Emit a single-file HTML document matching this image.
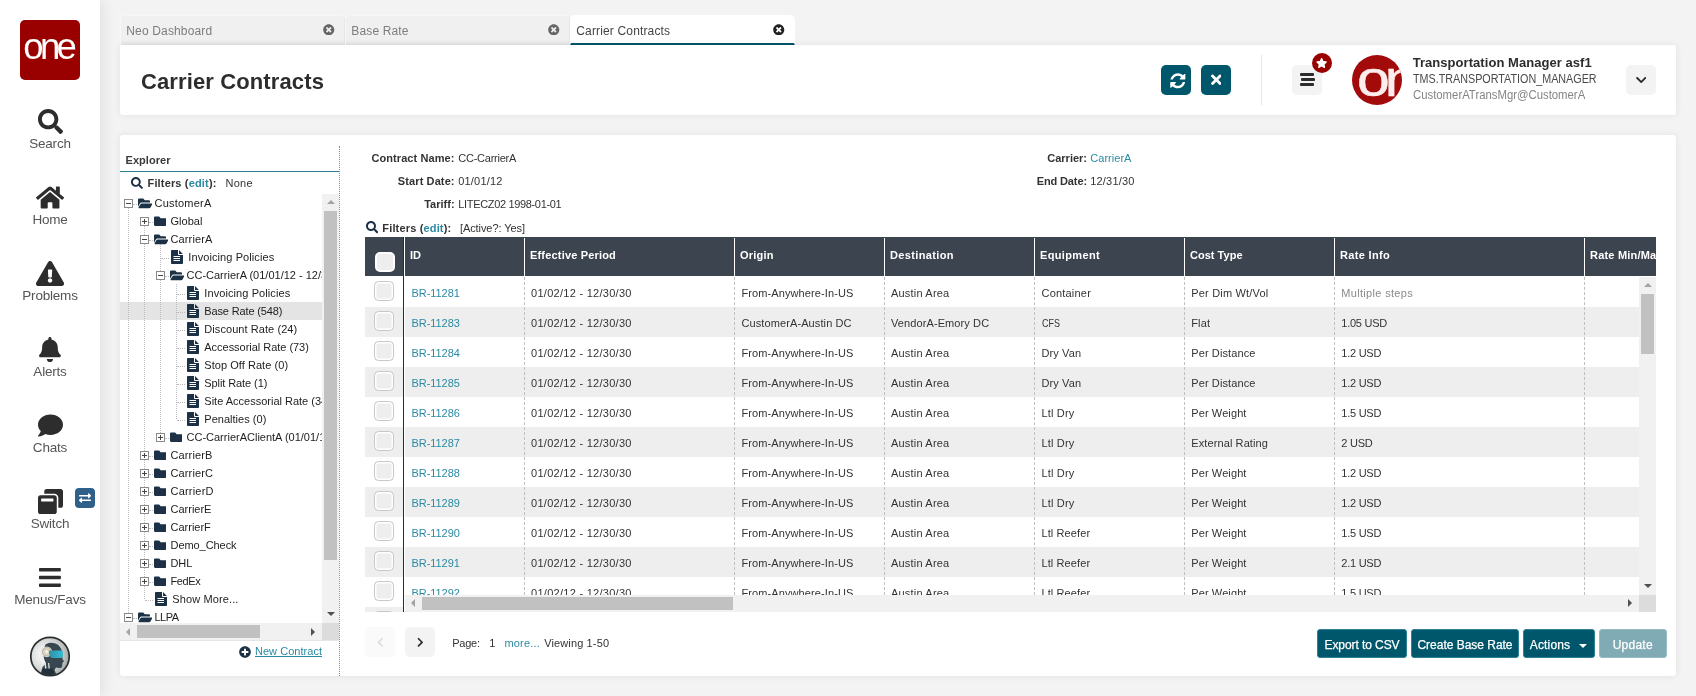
<!DOCTYPE html>
<html lang="en">
<head>
<meta charset="utf-8">
<title>Carrier Contracts</title>
<style>
*{box-sizing:border-box}
html,body{margin:0;padding:0}
body{width:1696px;height:696px;overflow:hidden;background:#f3f3f3;font-family:"Liberation Sans","DejaVu Sans",sans-serif;font-size:11px;color:#333;position:relative}
.abs{position:absolute}
a{color:#2b8aa3;text-decoration:none}
svg{display:block}
.t{position:absolute;white-space:nowrap;line-height:14px}
.b{font-weight:bold}
#side,.card,.tab{will-change:transform}
#side{position:absolute;left:0;top:0;width:100px;height:696px;background:#fff;box-shadow:0 0 16px rgba(0,0,0,.11)}
#logo{position:absolute;left:20px;top:20px;width:60px;height:60px;background:#990000;border-radius:5px}
.nav{position:absolute;left:0;width:100px;text-align:center;font-size:13.5px;color:#555;line-height:20px;letter-spacing:-.2px}
#bot{position:absolute;left:30px;top:635.500px;width:40px;height:41px}
.tab{position:absolute;top:15px;height:30px;width:225px;background:#f0f0f0;border:1px solid #f7f7f7;border-right-color:#e6e6e6;border-bottom:none;box-shadow:inset 0 -5px 4px -3px rgba(0,0,0,.06);border-radius:5px 5px 0 0;font-size:12px;color:#7d7d7d;line-height:30px;padding-left:5.300px;letter-spacing:.15px}
.tab.on{background:#fff;color:#444;border-color:#fff;box-shadow:none;border-bottom:2px solid #00566b}
.card{position:absolute;background:#fff;border-radius:3px;box-shadow:0 0 7px rgba(0,0,0,.075)}
.sq{position:absolute;width:30px;height:30px;border-radius:5px}
.teal{background:#00566b}
.lg{background:#f3f3f3}
.btn{position:absolute;height:29px;-webkit-text-stroke:.25px #fff;background:#00566b;border:1px solid #2f8196;border-radius:3px;color:#fff;font-size:12px;line-height:30px;text-align:center;white-space:nowrap}
.cb{position:absolute;left:9px;width:20px;height:20px;border:1px solid #c8c8c8;border-radius:4.500px;background:#eee;box-shadow:inset 0 0 0 1.500px #fff}
.row{position:absolute;left:0;height:30px;width:100%}
.row.g{background:#eee}
.cell{position:absolute;top:9px;white-space:nowrap;line-height:14px;letter-spacing:.1px}
.vd{position:absolute;top:0;width:0;border-left:1px dashed #c0c0c0}
.hs{position:absolute;top:1px;width:1px;height:38px;background:#fff}
.ht{position:absolute;top:11px;color:#fff;font-weight:bold;white-space:nowrap;line-height:14px}
.ex{position:absolute;width:9px;height:9px;border:1px solid #8a8a8a;background:#fff}
.ex:before{content:"";position:absolute;left:1px;top:3px;width:5px;height:1px;background:#444}
.ex.p:after{content:"";position:absolute;left:3px;top:1px;width:1px;height:5px;background:#444}
.tl{position:absolute;white-space:nowrap;line-height:14px;color:#1d1d1d}
.dv{position:absolute;width:0;border-left:1px dotted #bcbcbc}
.dh{position:absolute;height:0;border-top:1px dotted #bcbcbc}
</style>
</head>
<body>
<div id="side">
<div id="logo"><svg width="60" height="60" viewBox="0 0 60 60"><text x="3.300" y="39.300" font-family="Liberation Sans, sans-serif" font-size="36.500" fill="#fff" textLength="53.500" lengthAdjust="spacing">one</text></svg></div>
<svg class="abs" style="left:37.5px;top:108.5px" width="25.00" height="25" viewBox="0 0 512 512"><path fill="#2d2d2d" d="M505 442.7L405.3 343c-4.500-4.500-10.600-7-17-7H372c27.600-35.300 44-79.700 44-128C416 93.100 322.900 0 208 0S0 93.100 0 208s93.100 208 208 208c48.300 0 92.700-16.400 128-44v16.300c0 6.400 2.500 12.500 7 17l99.700 99.700c9.400 9.400 24.600 9.400 33.900 0l28.300-28.300c9.400-9.400 9.400-24.600.1-34zM208 336c-70.700 0-128-57.200-128-128 0-70.700 57.200-128 128-128 70.700 0 128 57.200 128 128 0 70.700-57.200 128-128 128z"/></svg>
<div class="nav" style="top:133.5px">Search</div>
<svg class="abs" style="left:35.9375px;top:184.5px" width="28.12" height="25" viewBox="0 0 576 512"><path fill="#2d2d2d" d="M280.370 148.260L96 300.110V464a16 16 0 0 0 16 16l112.060-.290a16 16 0 0 0 15.920-16V368a16 16 0 0 1 16-16h64a16 16 0 0 1 16 16v95.640a16 16 0 0 0 16 16.050L464 480a16 16 0 0 0 16-16V300L295.670 148.260a12.190 12.190 0 0 0-15.300 0zM571.600 251.470L488 182.560V44.050a12 12 0 0 0-12-12h-56a12 12 0 0 0-12 12v72.610L318.470 43a48 48 0 0 0-61 0L4.340 251.470a12 12 0 0 0-1.600 16.900l25.500 31A12 12 0 0 0 45.150 301l235.220-193.740a12.190 12.190 0 0 1 15.300 0L530.900 301a12 12 0 0 0 16.900-1.600l25.500-31a12 12 0 0 0-1.700-16.930z"/></svg>
<div class="nav" style="top:209.5px">Home</div>
<svg class="abs" style="left:35.9375px;top:260.5px" width="28.12" height="25" viewBox="0 0 576 512"><path fill="#2d2d2d" d="M569.517 440.013C587.975 472.007 564.806 512 527.940 512H48.054c-36.937 0-59.999-40.055-41.577-71.987L246.423 23.985c18.467-32.009 64.720-31.951 83.154 0l239.940 416.028zM288 354c-25.405 0-46 20.595-46 46s20.595 46 46 46 46-20.595 46-46-20.595-46-46-46zm-43.673-165.346l7.418 136c.347 6.364 5.609 11.346 11.982 11.346h48.546c6.373 0 11.635-4.982 11.982-11.346l7.418-136c.375-6.874-5.098-12.654-11.982-12.654h-63.383c-6.884 0-12.356 5.780-11.981 12.654z"/></svg>
<div class="nav" style="top:285.5px">Problems</div>
<svg class="abs" style="left:39.0625px;top:336.5px" width="21.88" height="25" viewBox="0 0 448 512"><path fill="#2d2d2d" d="M224 512c35.320 0 63.970-28.650 63.970-64H160.030c0 35.350 28.650 64 63.970 64zm215.390-149.710c-19.320-20.760-55.470-51.990-55.470-154.290 0-77.700-54.480-139.900-127.940-155.160V32c0-17.670-14.320-32-31.980-32s-31.980 14.330-31.980 32v20.840C118.560 68.100 64.080 130.300 64.080 208c0 102.300-36.150 133.530-55.470 154.290-6 6.450-8.660 14.160-8.610 21.710.110 16.400 12.980 32 32.100 32h383.800c19.120 0 32-15.600 32.100-32 .050-7.550-2.610-15.270-8.610-21.710z"/></svg>
<div class="nav" style="top:361.5px">Alerts</div>
<svg class="abs" style="left:37.5px;top:412.5px" width="25.00" height="25" viewBox="0 0 512 512"><path fill="#2d2d2d" d="M256 32C114.600 32 0 125.100 0 240c0 49.600 21.400 95 57 130.700C44.500 421.100 2.700 466 2.200 466.500c-2.200 2.300-2.800 5.700-1.500 8.700S4.800 480 8 480c66.300 0 116-31.800 140.600-51.400 32.700 12.300 69 19.400 107.400 19.400 141.400 0 256-93.100 256-208S397.400 32 256 32z"/></svg>
<div class="nav" style="top:437.5px">Chats</div>
<svg class="abs" style="left:37.5px;top:488.5px" width="25.00" height="25" viewBox="0 0 512 512"><path fill="#2d2d2d" d="M512 48v288c0 26.500-21.500 48-48 48h-48V176c0-44.100-35.900-80-80-80H128V48c0-26.500 21.500-48 48-48h288c26.500 0 48 21.500 48 48zM384 176v288c0 26.500-21.500 48-48 48H48c-26.500 0-48-21.500-48-48V176c0-26.500 21.500-48 48-48h288c26.500 0 48 21.500 48 48zm-68 28c0-6.600-5.400-12-12-12H76c-6.600 0-12 5.400-12 12v52h252v-52z"/></svg>
<div class="nav" style="top:513.5px">Switch</div>
<svg class="abs" style="left:39.0625px;top:564.5px" width="21.88" height="25" viewBox="0 0 448 512"><path fill="#2d2d2d" d="M16 132h416c8.837 0 16-7.163 16-16V76c0-8.837-7.163-16-16-16H16C7.163 60 0 67.163 0 76v40c0 8.837 7.163 16 16 16zm0 160h416c8.837 0 16-7.163 16-16v-40c0-8.837-7.163-16-16-16H16c-8.837 0-16 7.163-16 16v40c0 8.837 7.163 16 16 16zm0 160h416c8.837 0 16-7.163 16-16v-40c0-8.837-7.163-16-16-16H16c-8.837 0-16 7.163-16 16v40c0 8.837 7.163 16 16 16z"/></svg>
<div class="nav" style="top:589.5px">Menus/Favs</div>
<div class="abs" style="left:75px;top:488px;width:20px;height:20px;border-radius:4px;background:#2f6089"><svg class="abs" style="left:4px;top:4px" width="12.00" height="12" viewBox="0 0 512 512"><path fill="#fff" d="M0 168v-16c0-13.255 10.745-24 24-24h360V80c0-21.367 25.899-32.042 40.971-16.971l80 80c9.372 9.373 9.372 24.569 0 33.941l-80 80C409.956 271.982 384 261.456 384 240v-48H24c-13.255 0-24-10.745-24-24zm488 152H128v-48c0-21.314-25.862-32.080-40.971-16.971l-80 80c-9.372 9.373-9.372 24.569 0 33.941l80 80C102.057 463.997 128 453.437 128 432v-48h360c13.255 0 24-10.745 24-24v-16c0-13.255-10.745-24-24-24z"/></svg></div>
<div id="bot"><svg width="40" height="41" viewBox="0 0 40 41"><defs><radialGradient id="bg" cx="35%" cy="45%" r="75%"><stop offset="0" stop-color="#ffffff"/><stop offset=".55" stop-color="#d4d6d6"/><stop offset="1" stop-color="#8e9496"/></radialGradient><linearGradient id="vz" x1="0" x2="1"><stop offset="0" stop-color="#2f8fa6"/><stop offset="1" stop-color="#35bdd6"/></linearGradient><clipPath id="cc"><circle cx="20" cy="20.500" r="18.600"/></clipPath></defs><circle cx="20" cy="20.500" r="19.200" fill="url(#bg)" stroke="#2a2e30" stroke-width="1.700"/><g clip-path="url(#cc)"><path fill="#eef0f0" d="M10 19c0-7 4.500-12.500 11-12.500l-2 20-6.500 1C10.800 25 10 22 10 19z"/><path fill="#38474f" d="M15.500 8.500C18 6.500 22 6 25.500 7.500c4 1.700 6.300 5.200 6.800 9l.2 6.500 1.600 2.600-1.600.9-.3 3.200c-.2 1.700-1.500 2.500-3.200 2.300l-3-.5-1.500 2.500 2.500 6h-16l1.500-9 3.500-3.500c-1.500-3-2.500-6-2.500-9.500 0-3.500.8-7 2-9.500z"/><circle cx="16.700" cy="15.800" r="5.400" fill="#d9dddd"/><circle cx="16.700" cy="15.800" r="4.100" fill="none" stroke="#b79c63" stroke-width=".7"/><circle cx="16.700" cy="15.800" r="2.300" fill="#eef0f0" stroke="#cbb682" stroke-width=".6"/><path fill="url(#vz)" d="M19 14.600l12.300-.2c.9 0 1.500.6 1.500 1.500v4.200c0 1-.7 1.800-1.700 1.800l-8.300.2c-2.500 0-4-2.500-3.800-7.500z"/><path fill="#23323a" d="M12 32.500h11l2.500 8.500H10.500z"/><path fill="#dfe3e3" d="M14.500 26.500l1.200 0 .8 6h-1.500zM18 27l1.200 0 .6 5.500h-1.300z"/></g></svg></div>
</div>
<div class="tab" style="left:120px">Neo Dashboard<svg class="abs" style="left:202.2px;top:7.8px" width="11.50" height="11.5" viewBox="0 0 512 512"><path fill="#666" d="M256 8C119 8 8 119 8 256s111 248 248 248 248-111 248-248S393 8 256 8zm121.600 313.100c4.700 4.700 4.700 12.300 0 17L338 377.600c-4.700 4.700-12.300 4.700-17 0L256 312l-65.100 65.600c-4.700 4.700-12.300 4.700-17 0L134.400 338c-4.700-4.700-4.700-12.300 0-17l65.600-65-65.600-65.100c-4.700-4.700-4.700-12.300 0-17l39.600-39.600c4.700-4.700 12.300-4.700 17 0l65 65.700 65.100-65.600c4.700-4.700 12.300-4.700 17 0l39.600 39.600c4.700 4.700 4.700 12.300 0 17L312 256l65.600 65.100z"/></svg></div>
<div class="tab" style="left:345px">Base Rate<svg class="abs" style="left:202.2px;top:7.8px" width="11.50" height="11.5" viewBox="0 0 512 512"><path fill="#666" d="M256 8C119 8 8 119 8 256s111 248 248 248 248-111 248-248S393 8 256 8zm121.600 313.100c4.700 4.700 4.700 12.300 0 17L338 377.600c-4.700 4.700-12.300 4.700-17 0L256 312l-65.100 65.600c-4.700 4.700-12.300 4.700-17 0L134.400 338c-4.700-4.700-4.700-12.300 0-17l65.600-65-65.600-65.100c-4.700-4.700-4.700-12.300 0-17l39.600-39.600c4.700-4.700 12.300-4.700 17 0l65 65.700 65.100-65.600c4.700-4.700 12.300-4.700 17 0l39.600 39.600c4.700 4.700 4.700 12.300 0 17L312 256l65.600 65.100z"/></svg></div>
<div class="tab on" style="left:570px">Carrier Contracts<svg class="abs" style="left:202.2px;top:7.8px" width="11.50" height="11.5" viewBox="0 0 512 512"><path fill="#222" d="M256 8C119 8 8 119 8 256s111 248 248 248 248-111 248-248S393 8 256 8zm121.600 313.100c4.700 4.700 4.700 12.300 0 17L338 377.600c-4.700 4.700-12.300 4.700-17 0L256 312l-65.100 65.600c-4.700 4.700-12.300 4.700-17 0L134.400 338c-4.700-4.700-4.700-12.300 0-17l65.600-65-65.600-65.100c-4.700-4.700-4.700-12.300 0-17l39.600-39.600c4.700-4.700 12.300-4.700 17 0l65 65.700 65.100-65.600c4.700-4.700 12.300-4.700 17 0l39.600 39.600c4.700 4.700 4.700 12.300 0 17L312 256l65.600 65.100z"/></svg></div>
<div class="card" style="left:120px;top:45px;width:1556px;height:70px;border-top-left-radius:0">
<div class="t b" style="left:21px;top:21.700px;font-size:22px;line-height:30px;letter-spacing:.12px;color:#2d2d2d">Carrier Contracts</div>
<div class="sq teal" style="left:1041px;top:20px"><svg class="abs" style="left:7.700px;top:6.500px" width="17.600" height="17.600" viewBox="0 0 1792 1792"><path fill="#fff" d="M1639 1056q0 5-1 7-64 268-268 434.500t-478 166.500q-146 0-282.500-55t-243.500-157l-129 129q-19 19-45 19t-45-19-19-45v-448q0-26 19-45t45-19h448q26 0 45 19t19 45-19 45l-137 137q71 66 161 102t187 36q134 0 250-65t186-179q11-17 53-117 8-23 30-23h192q13 0 22.500 9.500t9.500 22.500zm25-800v448q0 26-19 45t-45 19h-448q-26 0-45-19t-19-45 19-45l138-138q-148-137-349-137-134 0-250 65t-186 179q-11 17-53 117-8 23-30 23h-199q-13 0-22.500-9.500t-9.500-22.500v-7q65-268 270-434.500t480-166.500q146 0 284 55.500t245 156.500l130-129q19-19 45-19t45 19 19 45z"/></svg></div>
<div class="sq teal" style="left:1081px;top:20px"><svg class="abs" style="left:9.9px;top:7.3px" width="10.59" height="15.4" viewBox="0 0 352 512"><path fill="#fff" d="M242.720 256l100.070-100.070c12.280-12.280 12.280-32.190 0-44.480l-22.240-22.240c-12.280-12.280-32.190-12.280-44.480 0L176 189.280 75.930 89.210c-12.280-12.280-32.190-12.280-44.480 0L9.210 111.450c-12.280 12.280-12.280 32.190 0 44.480L109.280 256 9.210 356.070c-12.280 12.280-12.280 32.190 0 44.480l22.240 22.240c12.280 12.280 32.200 12.280 44.480 0L176 322.720l100.070 100.070c12.280 12.280 32.200 12.280 44.480 0l22.240-22.240c12.280-12.280 12.280-32.190 0-44.480L242.720 256z"/></svg></div>
<div class="abs" style="left:1141px;top:10px;width:1px;height:50px;background:#e6e6e6"></div>
<div class="sq lg" style="left:1172px;top:20px"><i class="abs" style="left:8px;top:8.300px;width:13.500px;height:2.800px;border-radius:1px;background:#2d2d2d"></i><i class="abs" style="left:9px;top:13.200px;width:14px;height:2.800px;border-radius:1px;background:#2d2d2d"></i><i class="abs" style="left:8px;top:18.100px;width:13.500px;height:2.800px;border-radius:1px;background:#2d2d2d"></i></div>
<div class="abs" style="left:1192px;top:8px;width:20px;height:20px;border-radius:50%;background:#990000"><svg class="abs" style="left:4.4px;top:4.6px" width="11.25" height="10" viewBox="0 0 576 512"><path fill="#fff" d="M259.300 17.800L194 150.200 47.900 171.500c-26.200 3.800-36.700 36.100-17.700 54.600l105.700 103-25 145.500c-4.500 26.300 23.200 46 46.400 33.700L288 439.600l130.700 68.700c23.200 12.200 50.900-7.400 46.400-33.700l-25-145.500 105.700-103c19-18.500 8.500-50.800-17.700-54.600L382 150.200 316.700 17.800c-11.700-23.600-45.600-23.900-57.400 0z"/></svg></div>
<div class="abs" style="left:1232px;top:10px;width:50px;height:50px;border-radius:50%;background:#a30a0a;overflow:hidden"><svg width="50" height="50" viewBox="0 0 50 50"><text transform="scale(1.18,1)" x="4.300" y="40.800" font-family="Liberation Sans, sans-serif" font-size="50" fill="#fdeeee" stroke="#fdeeee" stroke-width=".500" letter-spacing="-4.300">one</text></svg></div>
<div class="t b" style="left:1292.700px;top:10px;font-size:13px;line-height:16px;letter-spacing:.05px;color:#2d2d2d">Transportation Manager asf1</div>
<div class="t" style="left:1292.700px;top:25.500px;font-size:12px;line-height:16px;color:#4a4a4a;transform:scaleX(.897);transform-origin:0 0">TMS.TRANSPORTATION_MANAGER</div>
<div class="t" style="left:1292.700px;top:41.500px;font-size:12px;line-height:16px;color:#858585;transform:scaleX(.945);transform-origin:0 0">CustomerATransMgr@CustomerA</div>
<div class="sq lg" style="left:1506px;top:20px"><svg class="abs" style="left:9.7px;top:9px" width="10.50" height="12" viewBox="0 0 448 512"><path fill="#2d2d2d" d="M207.029 381.476L12.686 187.132c-9.373-9.373-9.373-24.569 0-33.941l22.667-22.667c9.357-9.357 24.522-9.375 33.901-.04L224 284.505l154.745-154.021c9.379-9.335 24.544-9.317 33.901.04l22.667 22.667c9.373 9.373 9.373 24.569 0 33.941L240.971 381.476c-9.373 9.372-24.569 9.372-33.942 0z"/></svg></div>
</div>
<div class="card" style="left:120px;top:135px;width:1556px;height:541px">
<div class="t b" style="left:5.5px;top:17.5px;letter-spacing:0.04px;color:#3a3a3a">Explorer</div>
<div class="abs" style="left:0;top:36px;width:219px;height:1px;background:#2b7d91"></div>
<div class="dv" style="left:219px;top:11px;height:530px;border-left-color:#8c8c8c"></div>
<svg class="abs" style="left:11px;top:42px" width="12.00" height="12" viewBox="0 0 512 512"><path fill="#1c3046" d="M505 442.7L405.3 343c-4.500-4.500-10.600-7-17-7H372c27.600-35.300 44-79.700 44-128C416 93.100 322.900 0 208 0S0 93.100 0 208s93.100 208 208 208c48.300 0 92.700-16.400 128-44v16.300c0 6.400 2.500 12.500 7 17l99.700 99.700c9.400 9.400 24.600 9.400 33.900 0l28.300-28.300c9.400-9.400 9.400-24.600.1-34zM208 336c-70.700 0-128-57.200-128-128 0-70.700 57.200-128 128-128 70.700 0 128 57.200 128 128 0 70.700-57.200 128-128 128z"/></svg>
<div class="t b" style="left:27.5px;top:40.5px;letter-spacing:0.16px;">Filters (<a>edit</a>):</div>
<div class="t " style="left:105.5px;top:40.5px;letter-spacing:0.25px;">None</div>
<div class="abs" style="left:0;top:59px;width:202px;height:429px;overflow:hidden">
<div class="abs" style="left:0;top:108px;width:202px;height:18px;background:#e4e4e4"></div>
<div class="dv" style="left:8px;top:14px;height:405px"></div>
<div class="dv" style="left:24px;top:32px;height:373px"></div>
<div class="dv" style="left:40px;top:50px;height:193px"></div>
<div class="dv" style="left:56px;top:90px;height:135px"></div>
<div class="ex" style="left:4px;top:5px"></div>
<div class="dh" style="left:13px;top:9.5px;width:4px"></div>
<svg class="abs" style="left:18px;top:2.5px" width="14.40" height="12.8" viewBox="0 0 576 512"><path fill="#1c3046" d="M572.694 292.093L500.270 416.248A63.997 63.997 0 0 1 444.989 448H45.025c-18.523 0-30.064-20.093-20.731-36.093l72.424-124.155A64 64 0 0 1 152 256h399.964c18.523 0 30.064 20.093 20.730 36.093zM152 224h328v-48c0-26.510-21.490-48-48-48H272l-64-64H48C21.490 64 0 85.490 0 112v278.046l69.077-118.418C86.214 242.250 117.989 224 152 224z"/></svg>
<div class="tl" style="left:34.5px;top:2px;letter-spacing:0.22px">CustomerA</div>
<div class="ex p" style="left:20px;top:23px"></div>
<div class="dh" style="left:29px;top:27.5px;width:4px"></div>
<svg class="abs" style="left:33.8px;top:20.5px" width="12.60" height="12.6" viewBox="0 0 512 512"><path fill="#1c3046" d="M464 128H272l-64-64H48C21.490 64 0 85.490 0 112v288c0 26.510 21.490 48 48 48h416c26.510 0 48-21.490 48-48V176c0-26.510-21.490-48-48-48z"/></svg>
<div class="tl" style="left:50.5px;top:20px;letter-spacing:0.03px">Global</div>
<div class="ex" style="left:20px;top:41px"></div>
<div class="dh" style="left:29px;top:45.5px;width:4px"></div>
<svg class="abs" style="left:34px;top:38.5px" width="14.40" height="12.8" viewBox="0 0 576 512"><path fill="#1c3046" d="M572.694 292.093L500.270 416.248A63.997 63.997 0 0 1 444.989 448H45.025c-18.523 0-30.064-20.093-20.731-36.093l72.424-124.155A64 64 0 0 1 152 256h399.964c18.523 0 30.064 20.093 20.730 36.093zM152 224h328v-48c0-26.510-21.490-48-48-48H272l-64-64H48C21.490 64 0 85.490 0 112v278.046l69.077-118.418C86.214 242.250 117.989 224 152 224z"/></svg>
<div class="tl" style="left:50.5px;top:38px;letter-spacing:0.13px">CarrierA</div>
<div class="dh" style="left:41px;top:63.5px;width:8px"></div>
<svg class="abs" style="left:51px;top:56px" width="12" height="14" viewBox="0 0 12 14"><path fill="#1c3046" d="M.8 0H7v4.200c0 .450.350.800.800.800H12v8.200c0 .450-.350.800-.800.800H.8c-.450 0-.800-.350-.800-.800V.8C0 .350.350 0 .8 0zM8 0.100L11.900 4H8z"/><path fill="#fff" d="M2.500 6h6.500v1h-6.500zM2.500 8h6.500v1h-6.500zM2.500 10h6.500v1h-6.500z"/></svg>
<div class="tl" style="left:68.3px;top:56px;letter-spacing:0.09px">Invoicing Policies</div>
<div class="ex" style="left:36px;top:77px"></div>
<div class="dh" style="left:45px;top:81.5px;width:4px"></div>
<svg class="abs" style="left:50px;top:74.5px" width="14.40" height="12.8" viewBox="0 0 576 512"><path fill="#1c3046" d="M572.694 292.093L500.270 416.248A63.997 63.997 0 0 1 444.989 448H45.025c-18.523 0-30.064-20.093-20.731-36.093l72.424-124.155A64 64 0 0 1 152 256h399.964c18.523 0 30.064 20.093 20.730 36.093zM152 224h328v-48c0-26.510-21.490-48-48-48H272l-64-64H48C21.490 64 0 85.490 0 112v278.046l69.077-118.418C86.214 242.250 117.989 224 152 224z"/></svg>
<div class="tl" style="left:66.5px;top:74px;letter-spacing:0px">CC-CarrierA (01/01/12 - 12/31/30)</div>
<div class="dh" style="left:57px;top:99.5px;width:8px"></div>
<svg class="abs" style="left:67px;top:92px" width="12" height="14" viewBox="0 0 12 14"><path fill="#1c3046" d="M.8 0H7v4.200c0 .450.350.800.800.800H12v8.200c0 .450-.350.800-.800.800H.8c-.450 0-.800-.350-.800-.800V.8C0 .350.350 0 .8 0zM8 0.100L11.900 4H8z"/><path fill="#fff" d="M2.500 6h6.500v1h-6.500zM2.500 8h6.500v1h-6.500zM2.500 10h6.500v1h-6.500z"/></svg>
<div class="tl" style="left:84.3px;top:92px;letter-spacing:0.09px">Invoicing Policies</div>
<div class="dh" style="left:57px;top:117.5px;width:8px"></div>
<svg class="abs" style="left:67px;top:110px" width="12" height="14" viewBox="0 0 12 14"><path fill="#1c3046" d="M.8 0H7v4.200c0 .450.350.800.800.800H12v8.200c0 .450-.350.800-.800.800H.8c-.450 0-.800-.350-.800-.800V.8C0 .350.350 0 .8 0zM8 0.100L11.900 4H8z"/><path fill="#fff" d="M2.500 6h6.500v1h-6.500zM2.500 8h6.500v1h-6.500zM2.500 10h6.500v1h-6.500z"/></svg>
<div class="tl" style="left:84.3px;top:110px;letter-spacing:-0.14px">Base Rate (548)</div>
<div class="dh" style="left:57px;top:135.5px;width:8px"></div>
<svg class="abs" style="left:67px;top:128px" width="12" height="14" viewBox="0 0 12 14"><path fill="#1c3046" d="M.8 0H7v4.200c0 .450.350.800.800.800H12v8.200c0 .450-.350.800-.800.800H.8c-.450 0-.800-.350-.800-.800V.8C0 .350.350 0 .8 0zM8 0.100L11.900 4H8z"/><path fill="#fff" d="M2.500 6h6.500v1h-6.500zM2.500 8h6.500v1h-6.500zM2.500 10h6.500v1h-6.500z"/></svg>
<div class="tl" style="left:84.3px;top:128px;letter-spacing:0.07px">Discount Rate (24)</div>
<div class="dh" style="left:57px;top:153.5px;width:8px"></div>
<svg class="abs" style="left:67px;top:146px" width="12" height="14" viewBox="0 0 12 14"><path fill="#1c3046" d="M.8 0H7v4.200c0 .450.350.800.800.800H12v8.200c0 .450-.350.800-.800.800H.8c-.450 0-.800-.350-.800-.800V.8C0 .350.350 0 .8 0zM8 0.100L11.900 4H8z"/><path fill="#fff" d="M2.500 6h6.500v1h-6.500zM2.500 8h6.500v1h-6.500zM2.500 10h6.500v1h-6.500z"/></svg>
<div class="tl" style="left:84.3px;top:146px;letter-spacing:-0.03px">Accessorial Rate (73)</div>
<div class="dh" style="left:57px;top:171.5px;width:8px"></div>
<svg class="abs" style="left:67px;top:164px" width="12" height="14" viewBox="0 0 12 14"><path fill="#1c3046" d="M.8 0H7v4.200c0 .450.350.800.800.800H12v8.200c0 .450-.350.800-.800.800H.8c-.450 0-.800-.350-.800-.800V.8C0 .350.350 0 .8 0zM8 0.100L11.900 4H8z"/><path fill="#fff" d="M2.500 6h6.500v1h-6.500zM2.500 8h6.500v1h-6.500zM2.500 10h6.500v1h-6.500z"/></svg>
<div class="tl" style="left:84.3px;top:164px;letter-spacing:0.05px">Stop Off Rate (0)</div>
<div class="dh" style="left:57px;top:189.5px;width:8px"></div>
<svg class="abs" style="left:67px;top:182px" width="12" height="14" viewBox="0 0 12 14"><path fill="#1c3046" d="M.8 0H7v4.200c0 .450.350.800.800.800H12v8.200c0 .450-.350.800-.800.800H.8c-.450 0-.800-.350-.800-.800V.8C0 .350.350 0 .8 0zM8 0.100L11.900 4H8z"/><path fill="#fff" d="M2.500 6h6.500v1h-6.500zM2.500 8h6.500v1h-6.500zM2.500 10h6.500v1h-6.500z"/></svg>
<div class="tl" style="left:84.3px;top:182px;letter-spacing:-0.09px">Split Rate (1)</div>
<div class="dh" style="left:57px;top:207.5px;width:8px"></div>
<svg class="abs" style="left:67px;top:200px" width="12" height="14" viewBox="0 0 12 14"><path fill="#1c3046" d="M.8 0H7v4.200c0 .450.350.800.800.800H12v8.200c0 .450-.350.800-.800.800H.8c-.450 0-.800-.350-.800-.800V.8C0 .350.350 0 .8 0zM8 0.100L11.900 4H8z"/><path fill="#fff" d="M2.500 6h6.500v1h-6.500zM2.500 8h6.500v1h-6.500zM2.500 10h6.500v1h-6.500z"/></svg>
<div class="tl" style="left:84.3px;top:200px;letter-spacing:0px">Site Accessorial Rate (34)</div>
<div class="dh" style="left:57px;top:225.5px;width:8px"></div>
<svg class="abs" style="left:67px;top:218px" width="12" height="14" viewBox="0 0 12 14"><path fill="#1c3046" d="M.8 0H7v4.200c0 .450.350.800.800.800H12v8.200c0 .450-.350.800-.800.800H.8c-.450 0-.800-.350-.800-.800V.8C0 .350.350 0 .8 0zM8 0.100L11.900 4H8z"/><path fill="#fff" d="M2.500 6h6.500v1h-6.500zM2.500 8h6.500v1h-6.500zM2.500 10h6.500v1h-6.500z"/></svg>
<div class="tl" style="left:84.3px;top:218px;letter-spacing:0.02px">Penalties (0)</div>
<div class="ex p" style="left:36px;top:239px"></div>
<div class="dh" style="left:45px;top:243.5px;width:4px"></div>
<svg class="abs" style="left:49.8px;top:236.5px" width="12.60" height="12.6" viewBox="0 0 512 512"><path fill="#1c3046" d="M464 128H272l-64-64H48C21.490 64 0 85.490 0 112v288c0 26.510 21.490 48 48 48h416c26.510 0 48-21.490 48-48V176c0-26.510-21.490-48-48-48z"/></svg>
<div class="tl" style="left:66.5px;top:236px;letter-spacing:0px">CC-CarrierAClientA (01/01/12 - 12/31/30)</div>
<div class="ex p" style="left:20px;top:257px"></div>
<div class="dh" style="left:29px;top:261.5px;width:4px"></div>
<svg class="abs" style="left:33.8px;top:254.5px" width="12.60" height="12.6" viewBox="0 0 512 512"><path fill="#1c3046" d="M464 128H272l-64-64H48C21.490 64 0 85.490 0 112v288c0 26.510 21.490 48 48 48h416c26.510 0 48-21.490 48-48V176c0-26.510-21.490-48-48-48z"/></svg>
<div class="tl" style="left:50.5px;top:254px;letter-spacing:0.13px">CarrierB</div>
<div class="ex p" style="left:20px;top:275px"></div>
<div class="dh" style="left:29px;top:279.5px;width:4px"></div>
<svg class="abs" style="left:33.8px;top:272.5px" width="12.60" height="12.6" viewBox="0 0 512 512"><path fill="#1c3046" d="M464 128H272l-64-64H48C21.490 64 0 85.490 0 112v288c0 26.510 21.490 48 48 48h416c26.510 0 48-21.490 48-48V176c0-26.510-21.490-48-48-48z"/></svg>
<div class="tl" style="left:50.5px;top:272px;letter-spacing:0.13px">CarrierC</div>
<div class="ex p" style="left:20px;top:293px"></div>
<div class="dh" style="left:29px;top:297.5px;width:4px"></div>
<svg class="abs" style="left:33.8px;top:290.5px" width="12.60" height="12.6" viewBox="0 0 512 512"><path fill="#1c3046" d="M464 128H272l-64-64H48C21.490 64 0 85.490 0 112v288c0 26.510 21.490 48 48 48h416c26.510 0 48-21.490 48-48V176c0-26.510-21.490-48-48-48z"/></svg>
<div class="tl" style="left:50.5px;top:290px;letter-spacing:0.2px">CarrierD</div>
<div class="ex p" style="left:20px;top:311px"></div>
<div class="dh" style="left:29px;top:315.5px;width:4px"></div>
<svg class="abs" style="left:33.8px;top:308.5px" width="12.60" height="12.6" viewBox="0 0 512 512"><path fill="#1c3046" d="M464 128H272l-64-64H48C21.490 64 0 85.490 0 112v288c0 26.510 21.490 48 48 48h416c26.510 0 48-21.490 48-48V176c0-26.510-21.490-48-48-48z"/></svg>
<div class="tl" style="left:50.5px;top:308px;letter-spacing:0px">CarrierE</div>
<div class="ex p" style="left:20px;top:329px"></div>
<div class="dh" style="left:29px;top:333.5px;width:4px"></div>
<svg class="abs" style="left:33.8px;top:326.5px" width="12.60" height="12.6" viewBox="0 0 512 512"><path fill="#1c3046" d="M464 128H272l-64-64H48C21.490 64 0 85.490 0 112v288c0 26.510 21.490 48 48 48h416c26.510 0 48-21.490 48-48V176c0-26.510-21.490-48-48-48z"/></svg>
<div class="tl" style="left:50.5px;top:326px;letter-spacing:0px">CarrierF</div>
<div class="ex p" style="left:20px;top:347px"></div>
<div class="dh" style="left:29px;top:351.5px;width:4px"></div>
<svg class="abs" style="left:33.8px;top:344.5px" width="12.60" height="12.6" viewBox="0 0 512 512"><path fill="#1c3046" d="M464 128H272l-64-64H48C21.490 64 0 85.490 0 112v288c0 26.510 21.490 48 48 48h416c26.510 0 48-21.490 48-48V176c0-26.510-21.490-48-48-48z"/></svg>
<div class="tl" style="left:50.5px;top:344px;letter-spacing:-0.06px">Demo_Check</div>
<div class="ex p" style="left:20px;top:365px"></div>
<div class="dh" style="left:29px;top:369.5px;width:4px"></div>
<svg class="abs" style="left:33.8px;top:362.5px" width="12.60" height="12.6" viewBox="0 0 512 512"><path fill="#1c3046" d="M464 128H272l-64-64H48C21.490 64 0 85.490 0 112v288c0 26.510 21.490 48 48 48h416c26.510 0 48-21.490 48-48V176c0-26.510-21.490-48-48-48z"/></svg>
<div class="tl" style="left:50.5px;top:362px;letter-spacing:-0.09px">DHL</div>
<div class="ex p" style="left:20px;top:383px"></div>
<div class="dh" style="left:29px;top:387.5px;width:4px"></div>
<svg class="abs" style="left:33.8px;top:380.5px" width="12.60" height="12.6" viewBox="0 0 512 512"><path fill="#1c3046" d="M464 128H272l-64-64H48C21.490 64 0 85.490 0 112v288c0 26.510 21.490 48 48 48h416c26.510 0 48-21.490 48-48V176c0-26.510-21.490-48-48-48z"/></svg>
<div class="tl" style="left:50.5px;top:380px;letter-spacing:-0.41px">FedEx</div>
<div class="dh" style="left:25px;top:405.5px;width:8px"></div>
<svg class="abs" style="left:35px;top:398px" width="12" height="14" viewBox="0 0 12 14"><path fill="#1c3046" d="M.8 0H7v4.200c0 .450.350.800.800.800H12v8.200c0 .450-.350.800-.800.800H.8c-.450 0-.800-.350-.800-.800V.8C0 .350.350 0 .8 0zM8 0.100L11.900 4H8z"/><path fill="#fff" d="M2.500 6h6.500v1h-6.500zM2.500 8h6.500v1h-6.500zM2.500 10h6.500v1h-6.500z"/></svg>
<div class="tl" style="left:52.3px;top:398px;letter-spacing:0.12px">Show More...</div>
<div class="ex" style="left:4px;top:419px"></div>
<div class="dh" style="left:13px;top:423.5px;width:4px"></div>
<svg class="abs" style="left:18px;top:416.5px" width="14.40" height="12.8" viewBox="0 0 576 512"><path fill="#1c3046" d="M572.694 292.093L500.270 416.248A63.997 63.997 0 0 1 444.989 448H45.025c-18.523 0-30.064-20.093-20.731-36.093l72.424-124.155A64 64 0 0 1 152 256h399.964c18.523 0 30.064 20.093 20.730 36.093zM152 224h328v-48c0-26.510-21.490-48-48-48H272l-64-64H48C21.490 64 0 85.490 0 112v278.046l69.077-118.418C86.214 242.250 117.989 224 152 224z"/></svg>
<div class="tl" style="left:34.5px;top:416px;letter-spacing:-0.52px">LLPA</div>
</div>
<div class="abs" style="left:202px;top:59px;width:17px;height:429px;background:#f1f1f1"><i class="abs" style="left:2px;top:17px;width:13px;height:349px;background:#c1c1c1"></i><i class="abs" style="left:4.500px;top:6px;border:4px solid transparent;border-top:0;border-bottom:4.500px solid #a3a3a3"></i><i class="abs" style="left:4.500px;top:418px;border:4px solid transparent;border-bottom:0;border-top:4.500px solid #505050"></i></div>
<div class="abs" style="left:0;top:488px;width:202px;height:17px;background:#f1f1f1"><i class="abs" style="left:17px;top:2px;width:123px;height:13px;background:#c1c1c1"></i><i class="abs" style="left:6px;top:4.500px;border:4px solid transparent;border-left:0;border-right:4.500px solid #a3a3a3"></i><i class="abs" style="left:191px;top:4.500px;border:4px solid transparent;border-right:0;border-left:4.500px solid #505050"></i></div>
<div class="abs" style="left:202px;top:488px;width:17px;height:17px;background:#dcdcdc"></div>
<div class="abs" style="left:0;top:505px;width:219px;height:1px;background:#e6e6e6"></div>
<svg class="abs" style="left:119.2px;top:511.2px" width="12.00" height="12" viewBox="0 0 512 512"><path fill="#1c3046" d="M256 8C119 8 8 119 8 256s111 248 248 248 248-111 248-248S393 8 256 8zm144 276c0 6.600-5.400 12-12 12h-92v92c0 6.600-5.400 12-12 12h-56c-6.600 0-12-5.400-12-12v-92h-92c-6.600 0-12-5.400-12-12v-56c0-6.600 5.400-12 12-12h92v-92c0-6.600 5.400-12 12-12h56c6.600 0 12 5.400 12 12v92h92c6.600 0 12 5.400 12 12v56z"/></svg>
<div class="t " style="left:135px;top:509px;letter-spacing:0.03px;"><a style="text-decoration:underline">New Contract</a></div>
<div class="t b" style="left:251.4px;top:15.5px;letter-spacing:0.09px;">Contract Name:</div>
<div class="t " style="left:338.3px;top:15.5px;letter-spacing:-0.25px;">CC-CarrierA</div>
<div class="t b" style="left:277.8px;top:38.5px;letter-spacing:0.11px;">Start Date:</div>
<div class="t " style="left:338.3px;top:38.5px;letter-spacing:0.17px;">01/01/12</div>
<div class="t b" style="left:304.2px;top:61.5px;letter-spacing:0.01px;">Tariff:</div>
<div class="t " style="left:338.3px;top:61.5px;letter-spacing:-0.34px;">LITECZ02 1998-01-01</div>
<div class="t b" style="left:927.3px;top:15.5px;letter-spacing:-0.01px;">Carrier:</div>
<div class="t " style="left:970.3px;top:15.5px;letter-spacing:0.03px;"><a>CarrierA</a></div>
<div class="t b" style="left:916.7px;top:38.5px;letter-spacing:-0.12px;">End Date:</div>
<div class="t " style="left:970.3px;top:38.5px;letter-spacing:0.17px;">12/31/30</div>
<svg class="abs" style="left:246px;top:86.3px" width="12.30" height="12.3" viewBox="0 0 512 512"><path fill="#1c3046" d="M505 442.7L405.3 343c-4.500-4.500-10.600-7-17-7H372c27.600-35.300 44-79.700 44-128C416 93.100 322.900 0 208 0S0 93.100 0 208s93.100 208 208 208c48.300 0 92.700-16.400 128-44v16.300c0 6.400 2.500 12.500 7 17l99.700 99.700c9.400 9.400 24.600 9.400 33.900 0l28.300-28.300c9.400-9.400 9.400-24.600.1-34zM208 336c-70.700 0-128-57.200-128-128 0-70.700 57.200-128 128-128 70.700 0 128 57.200 128 128 0 70.700-57.200 128-128 128z"/></svg>
<div class="t b" style="left:262.3px;top:85.5px;letter-spacing:0.16px;">Filters (<a>edit</a>):</div>
<div class="t " style="left:339.9px;top:85.5px;letter-spacing:-0.07px;">[Active?: Yes]</div>
<div class="abs" style="left:245px;top:102px;width:1291px;height:375px;overflow:hidden">
<div class="abs" style="left:0;top:0;width:1291px;height:39px;background:#3c444f"></div>
<div class="abs" style="left:10px;top:15px;width:20px;height:20px;border:2px solid #fff;border-radius:5px;background:#eee"></div>
<div class="ht" style="left:45px;letter-spacing:0px">ID</div>
<div class="hs" style="left:159px"></div>
<div class="ht" style="left:165px;letter-spacing:0.18px">Effective Period</div>
<div class="hs" style="left:369px"></div>
<div class="ht" style="left:375px;letter-spacing:0.23px">Origin</div>
<div class="hs" style="left:519px"></div>
<div class="ht" style="left:525px;letter-spacing:0.37px">Destination</div>
<div class="hs" style="left:669px"></div>
<div class="ht" style="left:675px;letter-spacing:0.35px">Equipment</div>
<div class="hs" style="left:819px"></div>
<div class="ht" style="left:825px;letter-spacing:0.02px">Cost Type</div>
<div class="hs" style="left:969px"></div>
<div class="ht" style="left:975px;letter-spacing:0.33px">Rate Info</div>
<div class="hs" style="left:1219px"></div>
<div class="ht" style="left:1225px;letter-spacing:0.2px">Rate Min/Max</div>
<div class="abs" style="left:0;top:40px;width:38px;height:334.500px;overflow:hidden">
<div class="row" style="top:0px"><i class="cb" style="top:4px"></i></div>
<div class="row g" style="top:30px"><i class="cb" style="top:4px"></i></div>
<div class="row" style="top:60px"><i class="cb" style="top:4px"></i></div>
<div class="row g" style="top:90px"><i class="cb" style="top:4px"></i></div>
<div class="row" style="top:120px"><i class="cb" style="top:4px"></i></div>
<div class="row g" style="top:150px"><i class="cb" style="top:4px"></i></div>
<div class="row" style="top:180px"><i class="cb" style="top:4px"></i></div>
<div class="row g" style="top:210px"><i class="cb" style="top:4px"></i></div>
<div class="row" style="top:240px"><i class="cb" style="top:4px"></i></div>
<div class="row g" style="top:270px"><i class="cb" style="top:4px"></i></div>
<div class="row" style="top:300px"><i class="cb" style="top:4px"></i></div>
<div class="row g" style="top:330px"><i class="cb" style="top:4px"></i></div>
</div>
<div class="abs" style="left:38px;top:0;width:1px;height:375px;background:#2b2b2b"></div><div class="hs" style="left:39px;top:0;height:39px"></div>
<div class="abs" style="left:40px;top:40px;width:1234px;height:318px;overflow:hidden">
<div class="row" style="top:0px">
<a class="cell" style="left:6.500px;letter-spacing:-.05px">BR-11281</a>
<span class="cell" style="left:126px;letter-spacing:.28px">01/02/12 - 12/30/30</span>
<span class="cell" style="left:336.5px;letter-spacing:0.1px">From-Anywhere-In-US</span>
<span class="cell" style="left:486px;letter-spacing:0.19px">Austin Area</span>
<span class="cell" style="left:636.5px;letter-spacing:0.2px">Container</span>
<span class="cell" style="left:786.3px;letter-spacing:0.18px">Per Dim Wt/Vol</span>
<span class="cell" style="left:936.3px;letter-spacing:0.32px;color:#8a8a8a">Multiple steps</span>
</div>
<div class="row g" style="top:30px">
<a class="cell" style="left:6.500px;letter-spacing:-.05px">BR-11283</a>
<span class="cell" style="left:126px;letter-spacing:.28px">01/02/12 - 12/30/30</span>
<span class="cell" style="left:336.5px;letter-spacing:0.1px">CustomerA-Austin DC</span>
<span class="cell" style="left:486px;letter-spacing:0.1px">VendorA-Emory DC</span>
<span class="cell" style="left:636.5px;letter-spacing:0px;transform:scaleX(.82);transform-origin:0 50%">CFS</span>
<span class="cell" style="left:786.3px;letter-spacing:0.1px">Flat</span>
<span class="cell" style="left:936.3px;letter-spacing:-0.25px">1.05 USD</span>
</div>
<div class="row" style="top:60px">
<a class="cell" style="left:6.500px;letter-spacing:-.05px">BR-11284</a>
<span class="cell" style="left:126px;letter-spacing:.28px">01/02/12 - 12/30/30</span>
<span class="cell" style="left:336.5px;letter-spacing:0.1px">From-Anywhere-In-US</span>
<span class="cell" style="left:486px;letter-spacing:0.19px">Austin Area</span>
<span class="cell" style="left:636.5px;letter-spacing:0.1px">Dry Van</span>
<span class="cell" style="left:786.3px;letter-spacing:0.1px">Per Distance</span>
<span class="cell" style="left:936.3px;letter-spacing:-0.25px">1.2 USD</span>
</div>
<div class="row g" style="top:90px">
<a class="cell" style="left:6.500px;letter-spacing:-.05px">BR-11285</a>
<span class="cell" style="left:126px;letter-spacing:.28px">01/02/12 - 12/30/30</span>
<span class="cell" style="left:336.5px;letter-spacing:0.1px">From-Anywhere-In-US</span>
<span class="cell" style="left:486px;letter-spacing:0.19px">Austin Area</span>
<span class="cell" style="left:636.5px;letter-spacing:0.1px">Dry Van</span>
<span class="cell" style="left:786.3px;letter-spacing:0.1px">Per Distance</span>
<span class="cell" style="left:936.3px;letter-spacing:-0.25px">1.2 USD</span>
</div>
<div class="row" style="top:120px">
<a class="cell" style="left:6.500px;letter-spacing:-.05px">BR-11286</a>
<span class="cell" style="left:126px;letter-spacing:.28px">01/02/12 - 12/30/30</span>
<span class="cell" style="left:336.5px;letter-spacing:0.1px">From-Anywhere-In-US</span>
<span class="cell" style="left:486px;letter-spacing:0.19px">Austin Area</span>
<span class="cell" style="left:636.5px;letter-spacing:0.17px">Ltl Dry</span>
<span class="cell" style="left:786.3px;letter-spacing:0.1px">Per Weight</span>
<span class="cell" style="left:936.3px;letter-spacing:-0.25px">1.5 USD</span>
</div>
<div class="row g" style="top:150px">
<a class="cell" style="left:6.500px;letter-spacing:-.05px">BR-11287</a>
<span class="cell" style="left:126px;letter-spacing:.28px">01/02/12 - 12/30/30</span>
<span class="cell" style="left:336.5px;letter-spacing:0.1px">From-Anywhere-In-US</span>
<span class="cell" style="left:486px;letter-spacing:0.19px">Austin Area</span>
<span class="cell" style="left:636.5px;letter-spacing:0.17px">Ltl Dry</span>
<span class="cell" style="left:786.3px;letter-spacing:0.1px">External Rating</span>
<span class="cell" style="left:936.3px;letter-spacing:-0.25px">2 USD</span>
</div>
<div class="row" style="top:180px">
<a class="cell" style="left:6.500px;letter-spacing:-.05px">BR-11288</a>
<span class="cell" style="left:126px;letter-spacing:.28px">01/02/12 - 12/30/30</span>
<span class="cell" style="left:336.5px;letter-spacing:0.1px">From-Anywhere-In-US</span>
<span class="cell" style="left:486px;letter-spacing:0.19px">Austin Area</span>
<span class="cell" style="left:636.5px;letter-spacing:0.17px">Ltl Dry</span>
<span class="cell" style="left:786.3px;letter-spacing:0.1px">Per Weight</span>
<span class="cell" style="left:936.3px;letter-spacing:-0.25px">1.2 USD</span>
</div>
<div class="row g" style="top:210px">
<a class="cell" style="left:6.500px;letter-spacing:-.05px">BR-11289</a>
<span class="cell" style="left:126px;letter-spacing:.28px">01/02/12 - 12/30/30</span>
<span class="cell" style="left:336.5px;letter-spacing:0.1px">From-Anywhere-In-US</span>
<span class="cell" style="left:486px;letter-spacing:0.19px">Austin Area</span>
<span class="cell" style="left:636.5px;letter-spacing:0.17px">Ltl Dry</span>
<span class="cell" style="left:786.3px;letter-spacing:0.1px">Per Weight</span>
<span class="cell" style="left:936.3px;letter-spacing:-0.25px">1.2 USD</span>
</div>
<div class="row" style="top:240px">
<a class="cell" style="left:6.500px;letter-spacing:-.05px">BR-11290</a>
<span class="cell" style="left:126px;letter-spacing:.28px">01/02/12 - 12/30/30</span>
<span class="cell" style="left:336.5px;letter-spacing:0.1px">From-Anywhere-In-US</span>
<span class="cell" style="left:486px;letter-spacing:0.19px">Austin Area</span>
<span class="cell" style="left:636.5px;letter-spacing:0.1px">Ltl Reefer</span>
<span class="cell" style="left:786.3px;letter-spacing:0.1px">Per Weight</span>
<span class="cell" style="left:936.3px;letter-spacing:-0.25px">1.5 USD</span>
</div>
<div class="row g" style="top:270px">
<a class="cell" style="left:6.500px;letter-spacing:-.05px">BR-11291</a>
<span class="cell" style="left:126px;letter-spacing:.28px">01/02/12 - 12/30/30</span>
<span class="cell" style="left:336.5px;letter-spacing:0.1px">From-Anywhere-In-US</span>
<span class="cell" style="left:486px;letter-spacing:0.19px">Austin Area</span>
<span class="cell" style="left:636.5px;letter-spacing:0.1px">Ltl Reefer</span>
<span class="cell" style="left:786.3px;letter-spacing:0.1px">Per Weight</span>
<span class="cell" style="left:936.3px;letter-spacing:-0.25px">2.1 USD</span>
</div>
<div class="row" style="top:300px">
<a class="cell" style="left:6.500px;letter-spacing:-.05px">BR-11292</a>
<span class="cell" style="left:126px;letter-spacing:.28px">01/02/12 - 12/30/30</span>
<span class="cell" style="left:336.5px;letter-spacing:0.1px">From-Anywhere-In-US</span>
<span class="cell" style="left:486px;letter-spacing:0.19px">Austin Area</span>
<span class="cell" style="left:636.5px;letter-spacing:0.1px">Ltl Reefer</span>
<span class="cell" style="left:786.3px;letter-spacing:0.1px">Per Weight</span>
<span class="cell" style="left:936.3px;letter-spacing:-0.25px">1.5 USD</span>
</div>
<div class="row g" style="top:330px">
<a class="cell" style="left:6.500px;letter-spacing:-.05px">BR-11293</a>
<span class="cell" style="left:126px;letter-spacing:.28px">01/02/12 - 12/30/30</span>
<span class="cell" style="left:336.5px;letter-spacing:0.1px">From-Anywhere-In-US</span>
<span class="cell" style="left:486px;letter-spacing:0.19px">Austin Area</span>
<span class="cell" style="left:636.5px;letter-spacing:0.1px">Ltl Reefer</span>
<span class="cell" style="left:786.3px;letter-spacing:0.1px">Per Weight</span>
<span class="cell" style="left:936.3px;letter-spacing:-0.25px">1.5 USD</span>
</div>
<div class="vd" style="left:119px;height:318px"></div>
<div class="vd" style="left:329px;height:318px"></div>
<div class="vd" style="left:479px;height:318px"></div>
<div class="vd" style="left:629px;height:318px"></div>
<div class="vd" style="left:779px;height:318px"></div>
<div class="vd" style="left:929px;height:318px"></div>
<div class="vd" style="left:1179px;height:318px"></div>
</div>
<div class="abs" style="left:1274px;top:40px;width:17px;height:318px;background:#f1f1f1"><i class="abs" style="left:2px;top:16.500px;width:13px;height:60.500px;background:#c1c1c1"></i><i class="abs" style="left:4.500px;top:6px;border:4px solid transparent;border-top:0;border-bottom:4.500px solid #a3a3a3"></i><i class="abs" style="left:4.500px;top:306.500px;border:4px solid transparent;border-bottom:0;border-top:4.500px solid #505050"></i></div>
<div class="abs" style="left:40px;top:358px;width:1234px;height:16.500px;background:#f1f1f1"><i class="abs" style="left:17px;top:2px;width:311px;height:12.500px;background:#c1c1c1"></i><i class="abs" style="left:6px;top:4.200px;border:4px solid transparent;border-left:0;border-right:4.500px solid #a3a3a3"></i><i class="abs" style="left:1223px;top:4.200px;border:4px solid transparent;border-right:0;border-left:4.500px solid #505050"></i></div>
<div class="abs" style="left:1274px;top:358px;width:17px;height:16.500px;background:#dcdcdc"></div>
</div>
<div class="sq" style="left:245px;top:492px;background:#fafafa"><svg class="abs" style="left:11.7px;top:9.7px;transform:scaleX(-1)" width="6.62" height="10.6" viewBox="0 0 320 512"><path fill="#dedede" d="M285.476 272.971L91.132 467.314c-9.373 9.373-24.569 9.373-33.941 0l-22.667-22.667c-9.357-9.357-9.375-24.522-.04-33.901L188.505 256 34.484 101.255c-9.335-9.379-9.317-24.544.04-33.901l22.667-22.667c9.373-9.373 24.569-9.373 33.941 0L285.475 239.030c9.373 9.372 9.373 24.568.001 33.941z"/></svg></div>
<div class="sq lg" style="left:285px;top:492px"><svg class="abs" style="left:12px;top:9.7px" width="6.62" height="10.6" viewBox="0 0 320 512"><path fill="#2d2d2d" d="M285.476 272.971L91.132 467.314c-9.373 9.373-24.569 9.373-33.941 0l-22.667-22.667c-9.357-9.357-9.375-24.522-.04-33.901L188.505 256 34.484 101.255c-9.335-9.379-9.317-24.544.04-33.901l22.667-22.667c9.373-9.373 24.569-9.373 33.941 0L285.475 239.030c9.373 9.372 9.373 24.568.001 33.941z"/></svg></div>
<div class="t " style="left:332.3px;top:500.5px;letter-spacing:-0.27px;">Page:</div>
<div class="t " style="left:369.3px;top:500.5px;">1</div>
<div class="t " style="left:384.5px;top:500.5px;letter-spacing:0.17px;"><a>more...</a></div>
<div class="t " style="left:424.2px;top:500.5px;letter-spacing:0.13px;">Viewing 1-50</div>
<div class="btn" style="left:1197px;top:494px;width:90px;letter-spacing:-0.08px;">Export to CSV</div>
<div class="btn" style="left:1291px;top:494px;width:108px;letter-spacing:-0.02px;">Create Base Rate</div>
<div class="btn" style="left:1403px;top:494px;width:72px;letter-spacing:0.15px;padding-right:1px;">Actions<i style="display:inline-block;margin-left:9px;vertical-align:1.500px;border:4px solid transparent;border-bottom:0;border-top:4.500px solid #fff"></i></div>
<div class="btn" style="left:1479px;top:494px;width:67.5px;letter-spacing:0.25px;background:#80abb5;border-color:#97bcc6">Update</div>
</div>
</body>
</html>
